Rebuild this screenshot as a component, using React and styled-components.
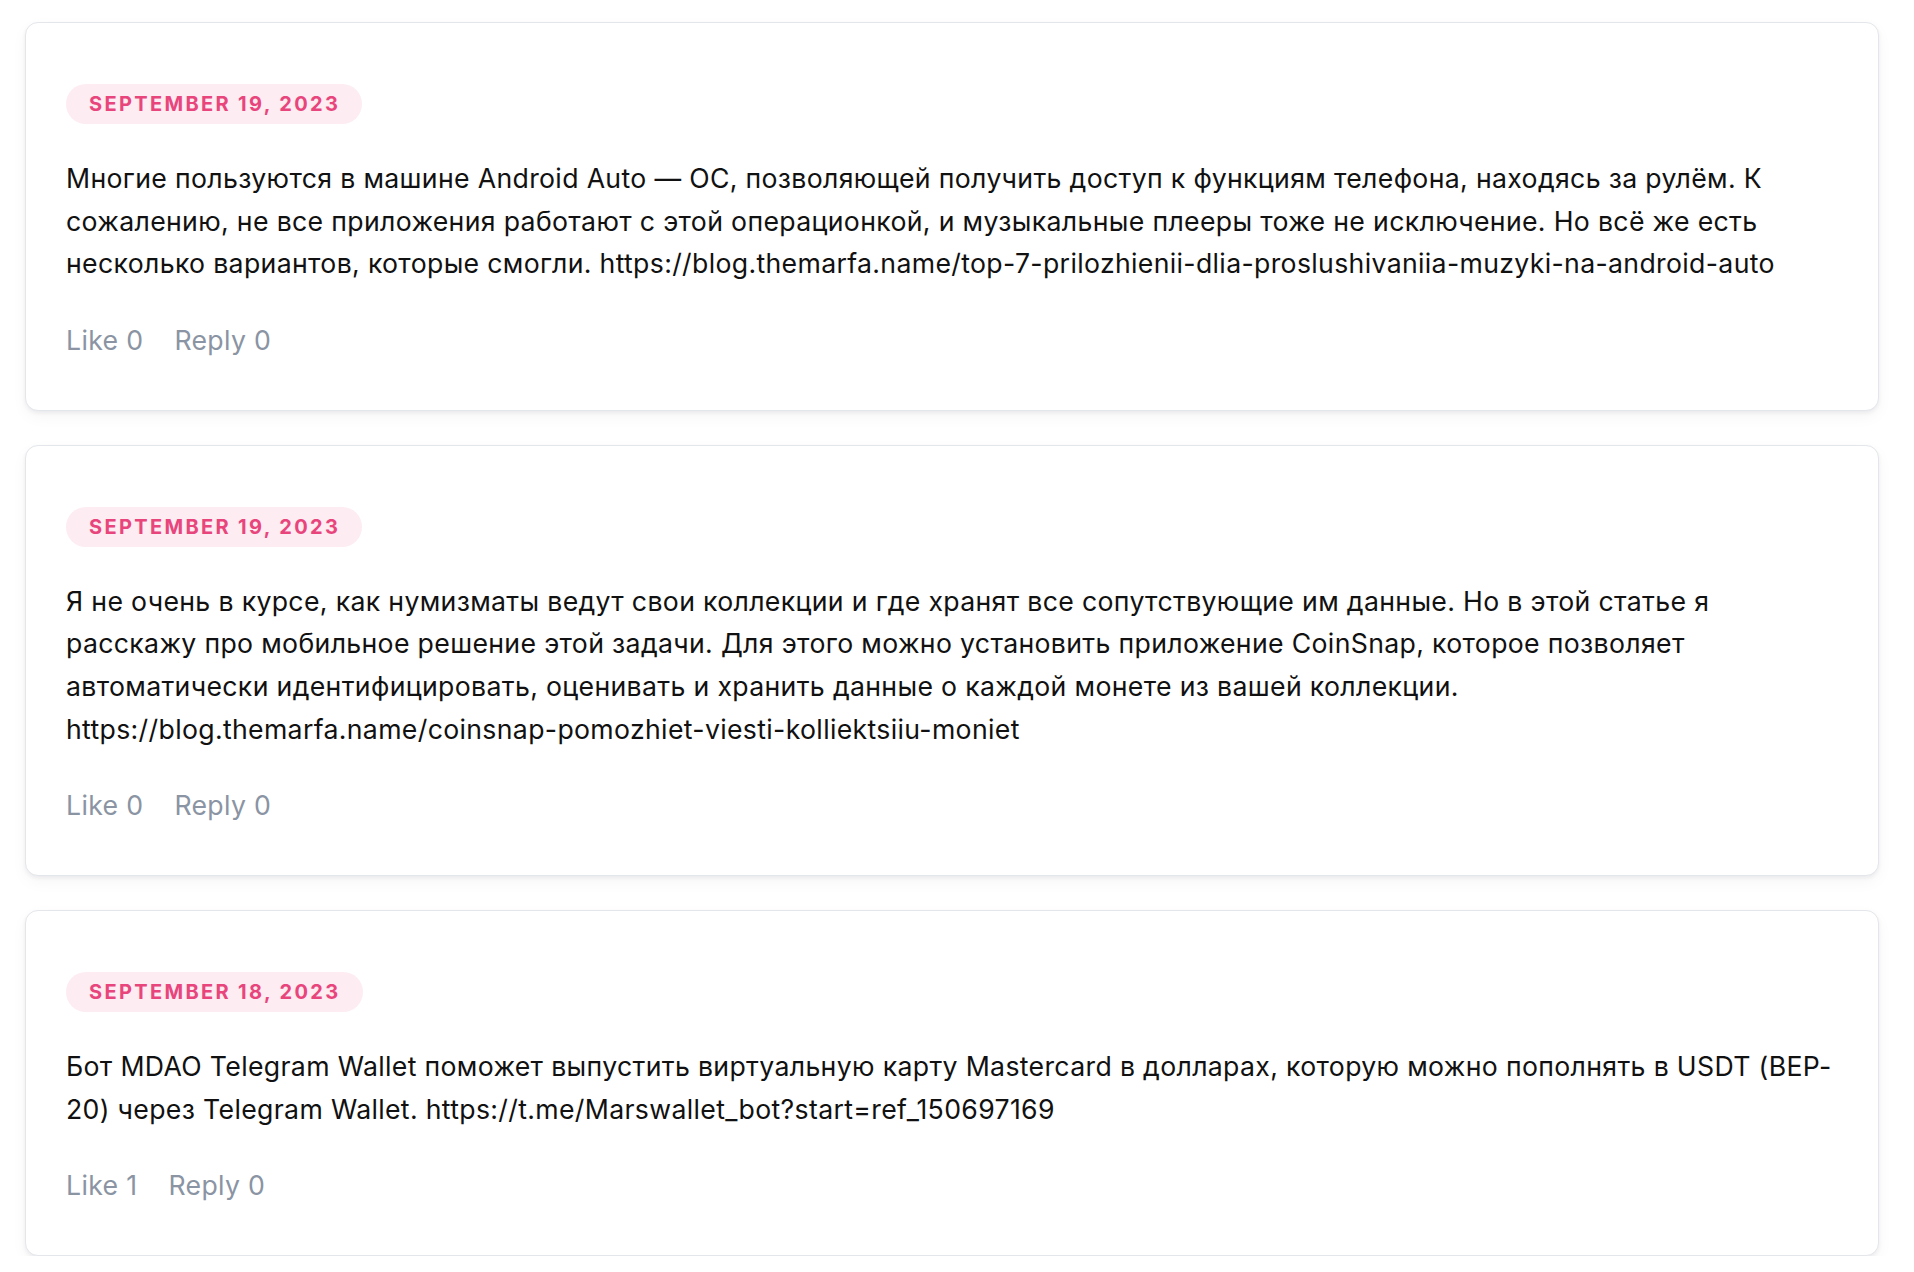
import React from 'react'
import styled, { createGlobalStyle } from 'styled-components'

const comments = [
  {
    date: 'September 19, 2023',
    text: 'Многие пользуются в машине Android Auto — ОС, позволяющей получить доступ к функциям телефона, находясь за рулём. К сожалению, не все приложения работают с этой операционкой, и музыкальные плееры тоже не исключение. Но всё же есть несколько вариантов, которые смогли. https://blog.themarfa.name/top-7-prilozhienii-dlia-proslushivaniia-muzyki-na-android-auto',
    likes: 0,
    replies: 0,
  },
  {
    date: 'September 19, 2023',
    text: 'Я не очень в курсе, как нумизматы ведут свои коллекции и где хранят все сопутствующие им данные. Но в этой статье я расскажу про мобильное решение этой задачи. Для этого можно установить приложение CoinSnap, которое позволяет автоматически идентифицировать, оценивать и хранить данные о каждой монете из вашей коллекции. https://blog.themarfa.name/coinsnap-pomozhiet-viesti-kolliektsiiu-moniet',
    likes: 0,
    replies: 0,
  },
  {
    date: 'September 18, 2023',
    text: 'Бот MDAO Telegram Wallet поможет выпустить виртуальную карту Mastercard в долларах, которую можно пополнять в USDT (BEP-20) через Telegram Wallet. https://t.me/Marswallet_bot?start=ref_150697169',
    likes: 1,
    replies: 0,
  },
]

function App() {
  return (
    <>
      <GlobalStyle />
      <List>
        {comments.map((c, i) => (
          <Card key={i}>
            <DateBadge>{c.date}</DateBadge>
            <Body>{c.text}</Body>
            <Actions>
              <Action>Like {c.likes}</Action>
              <Action>Reply {c.replies}</Action>
            </Actions>
          </Card>
        ))}
      </List>
    </>
  )
}

const GlobalStyle = createGlobalStyle`
  body {
    margin: 0;
    background: #ffffff;
    font-family: Inter, "Noto Sans", sans-serif;
  }
`
const List = styled.div`
  display: flex;
  flex-direction: column;
  gap: 34px;
  padding: 22px 35px 0 25px;
`
const Card = styled.div`
  display: flex;
  flex-direction: column;
  align-items: flex-start;
  padding: 61px 40px 48px 40px;
  background: #ffffff;
  border: 1px solid #e3e6eb;
  border-radius: 13px;
  box-shadow: 0 2px 4px rgba(15, 23, 42, 0.06), 0 6px 16px rgba(15, 23, 42, 0.04);
`
const DateBadge = styled.div`
  height: 40px;
  padding: 0 22px 0 23px;
  display: flex;
  align-items: center;
  border-radius: 999px;
  background: #fdecf2;
  color: #e8457c;
  font-size: 20px;
  font-weight: 700;
  letter-spacing: 2.35px;
  text-transform: uppercase;
`
const Body = styled.div`
  margin-top: 33px;
  font-size: 26.67px;
  line-height: 42.67px;
  color: #111111;
  letter-spacing: 0.33px;
`
const Actions = styled.div`
  display: flex;
  gap: 31px;
  margin-top: 34px;
`
const Action = styled.span`
  font-size: 26.67px;
  line-height: 42.67px;
  color: #8a94a3;
  letter-spacing: 0.33px;
`

export default App
